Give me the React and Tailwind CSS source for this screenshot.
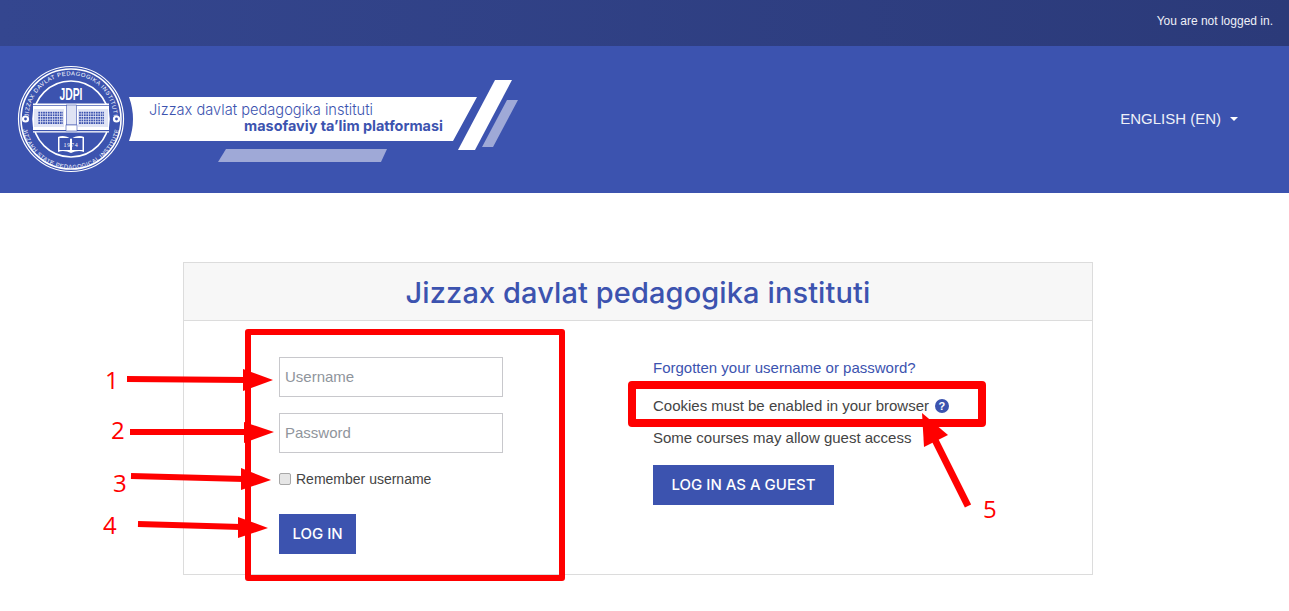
const Logo = () => (
  <svg className="h-[147px] w-[530px] shrink-0" viewBox="0 46 530 147" xmlns="http://www.w3.org/2000/svg">
    <defs>
      <path id="seal-top" d="M 30 129 A 42.5 42.5 0 1 1 112 129" />
      <path id="seal-bottom" d="M 23 110 A 49 49 0 1 0 119 110" />
      <pattern id="windows" width="2.4" height="2.6" patternUnits="userSpaceOnUse">
        <rect width="1.7" height="1.8" fill="#3c53af" />
      </pattern>
    </defs>

    <circle cx="71" cy="119" r="52.5" fill="none" stroke="#fff" strokeWidth="1.2" />
    <circle cx="71" cy="119" r="50" fill="none" stroke="#fff" strokeWidth="1.6" />
    <circle cx="71" cy="119" r="38" fill="none" stroke="#fff" strokeWidth="1.6" />
    <text fill="#fff" fontFamily="'Liberation Sans', sans-serif" fontSize="5.8" letterSpacing="0.55">
      <textPath href="#seal-top" startOffset="50%" textAnchor="middle">JIZZAX DAVLAT PEDAGOGIKA INSTITUTI</textPath>
    </text>
    <text fill="#fff" fontFamily="'Liberation Sans', sans-serif" fontSize="5.8" letterSpacing="0.45">
      <textPath href="#seal-bottom" startOffset="50%" textAnchor="middle">JIZZAKH STATE PEDAGOGICAL INSTITUTE</textPath>
    </text>
    <circle cx="25.5" cy="119" r="3.6" fill="#fff" />
    <circle cx="25.5" cy="119" r="1.4" fill="#3c53af" />
    <circle cx="116.5" cy="119" r="3.6" fill="#fff" />
    <circle cx="116.5" cy="119" r="1.4" fill="#3c53af" />

    <text x="71" y="99.5" textAnchor="middle" fill="#fff" fontFamily="'Liberation Sans', sans-serif" fontSize="17" fontWeight="700" textLength="23" lengthAdjust="spacingAndGlyphs">JDPI</text>

    <rect x="33" y="103.5" width="76" height="29" fill="#fff" />
    <rect x="33" y="105" width="76" height="1" fill="#3c53af" opacity="0.7" />
    <rect x="33" y="130" width="76" height="1.2" fill="#3c53af" />
    <rect x="34" y="109" width="30" height="18" fill="#dfe3f4" />
    <rect x="78" y="109" width="30" height="18" fill="#dfe3f4" />
    <rect x="38" y="111" width="25" height="13" fill="url(#windows)" />
    <rect x="79" y="111" width="25" height="13" fill="url(#windows)" />
    <rect x="66.5" y="105" width="10" height="20" fill="#dfe3f4" stroke="#3c53af" strokeWidth="0.6" />
    <rect x="66" y="125" width="11" height="6" fill="#fff" stroke="#3c53af" strokeWidth="0.6" />

    <path d="M58 137 C62 135 67 136 71 139 C75 136 80 135 84 137 V152 C80 150 75 151 71 153 C67 151 62 150 58 152 Z" fill="#fff" />
    <rect x="59.5" y="138" width="10.5" height="12" fill="#3c53af" />
    <rect x="72" y="138" width="10.5" height="12" fill="#3c53af" />
    <text x="71" y="147" textAnchor="middle" fill="#fff" fontFamily="'Liberation Serif', serif" fontSize="6" letterSpacing="0.8">1974</text>

    <path d="M129 97 H477 L453 141 H129 Q137 119 129 97 Z" fill="#fff" />
    <text x="149" y="115" fill="#3c53af" fontFamily="Inter, sans-serif" fontSize="15" fontWeight="300" textLength="224" lengthAdjust="spacingAndGlyphs">Jizzax davlat pedagogika instituti</text>
    <text x="244" y="131" fill="#3c53af" fontFamily="Inter, sans-serif" fontSize="14.5" fontWeight="700" textLength="199" lengthAdjust="spacingAndGlyphs">masofaviy ta’lim platformasi</text>
    <polygon points="495,80 512,80 475,150 458,150" fill="#fff" />
    <polygon points="507,100 518,100 493,147 482,147" fill="#9fa9d7" />
    <polygon points="226,149 387,149 381,162 218,162" fill="#9fa9d7" />
  </svg>
);

// red markup drawn over the page: boxes, arrows, numbers
const Annotations = () => (
  <svg className="pointer-events-none absolute left-0 top-0 h-[611px] w-[1289px]" viewBox="0 0 1289 611" xmlns="http://www.w3.org/2000/svg">
    <g fill="none" stroke="#ff0000" strokeLinejoin="round">
      <rect x="248" y="332" width="314" height="246" strokeWidth="6" />
      <rect x="632" y="385" width="350" height="38" strokeWidth="8" />
    </g>
    <g stroke="#ff0000" strokeWidth="6">
      <line x1="127" y1="379" x2="246" y2="380" />
      <line x1="130" y1="432" x2="246" y2="432" />
      <line x1="131" y1="476" x2="244" y2="479" />
      <line x1="138" y1="524" x2="241" y2="527" />
      <line x1="968" y1="506" x2="935" y2="440" strokeWidth="7" />
    </g>
    <g fill="#ff0000">
      <polygon points="243,369 273,380 243,391" />
      <polygon points="244,422 274,432 244,443" />
      <polygon points="241,468 271,480 241,490" />
      <polygon points="238,517 268,528 238,538" />
      <polygon points="922,413 948,435 924,447" />
    </g>
    <g fill="#ff0000" fontFamily="'Open Sans', sans-serif" fontSize="24">
      <text x="105" y="389">1</text>
      <text x="111" y="439">2</text>
      <text x="113" y="492">3</text>
      <text x="103" y="534">4</text>
      <text x="983" y="518">5</text>
    </g>
  </svg>
);

export default function App() {
  return (
    <div className="relative h-[611px] overflow-hidden bg-white font-['Liberation_Sans',sans-serif] text-[15px] text-[#444]">
      <div className="flex h-[46px] items-start justify-end bg-gradient-to-r from-[#34468f] to-[#2b3a79] pr-4 pt-[13px] text-xs text-[#eef0f8]">
        You are not logged in.
      </div>
      <header className="flex h-[147px] items-center justify-between bg-[#3c53af] pr-[51px]">
        <Logo />
        <div className="flex items-center gap-[9px] text-[#eef0f8]">
          ENGLISH (EN)
          <span className="mb-[2px] h-0 w-0 border-x-[4.5px] border-t-[4px] border-x-transparent border-t-white" />
        </div>
      </header>

      <main className="ml-[183px] mt-[69px] w-[910px] border border-[#dcdcdc]">
        <div className="flex h-[58px] items-center justify-center border-b border-[#dcdcdc] bg-[#f7f7f7] pt-[2px] font-['Inter',sans-serif] text-[29px] font-medium tracking-[0.1px] text-[#3c53af]">
          Jizzax davlat pedagogika instituti
        </div>
        <div className="flex h-[253px]">
          <form className="ml-[95px] mt-9 w-[374px]">
            <input
              className="block h-10 w-56 border border-[#c8c8cc] px-[5px] pb-[2px] placeholder:text-[#8f959c]"
              placeholder="Username"
            />
            <input
              className="mt-4 block h-10 w-56 border border-[#c8c8cc] px-[5px] pb-[2px] placeholder:text-[#8f959c]"
              placeholder="Password"
              type="password"
            />
            <label className="mt-4 flex items-center gap-[5px] text-sm">
              <input type="checkbox" className="h-3 w-3 appearance-none rounded-[2px] border border-[#a8a8a8] bg-[#e6e6e6]" />
              Remember username
            </label>
            <button
              type="button"
              className="mt-[25px] block h-10 w-[77px] bg-[#3c53af] font-['Inter',sans-serif] text-[15px] font-medium text-white"
            >
              LOG IN
            </button>
          </form>
          <div className="pt-[37px]">
            <a className="block leading-5 text-[#3c53af]">Forgotten your username or password?</a>
            <div className="mt-[18px] flex items-center gap-[6px] leading-5">
              Cookies must be enabled in your browser
              <span className="flex h-[14px] w-[14px] items-center justify-center rounded-full bg-[#3c53af] text-[11px] font-bold text-white">?</span>
            </div>
            <div className="mt-3 leading-5">Some courses may allow guest access</div>
            <button
              type="button"
              className="mt-[17px] block h-10 w-[181px] bg-[#3c53af] font-['Inter',sans-serif] text-[15px] font-medium text-white"
            >
              LOG IN AS A GUEST
            </button>
          </div>
        </div>
      </main>
      <Annotations />
    </div>
  );
}
